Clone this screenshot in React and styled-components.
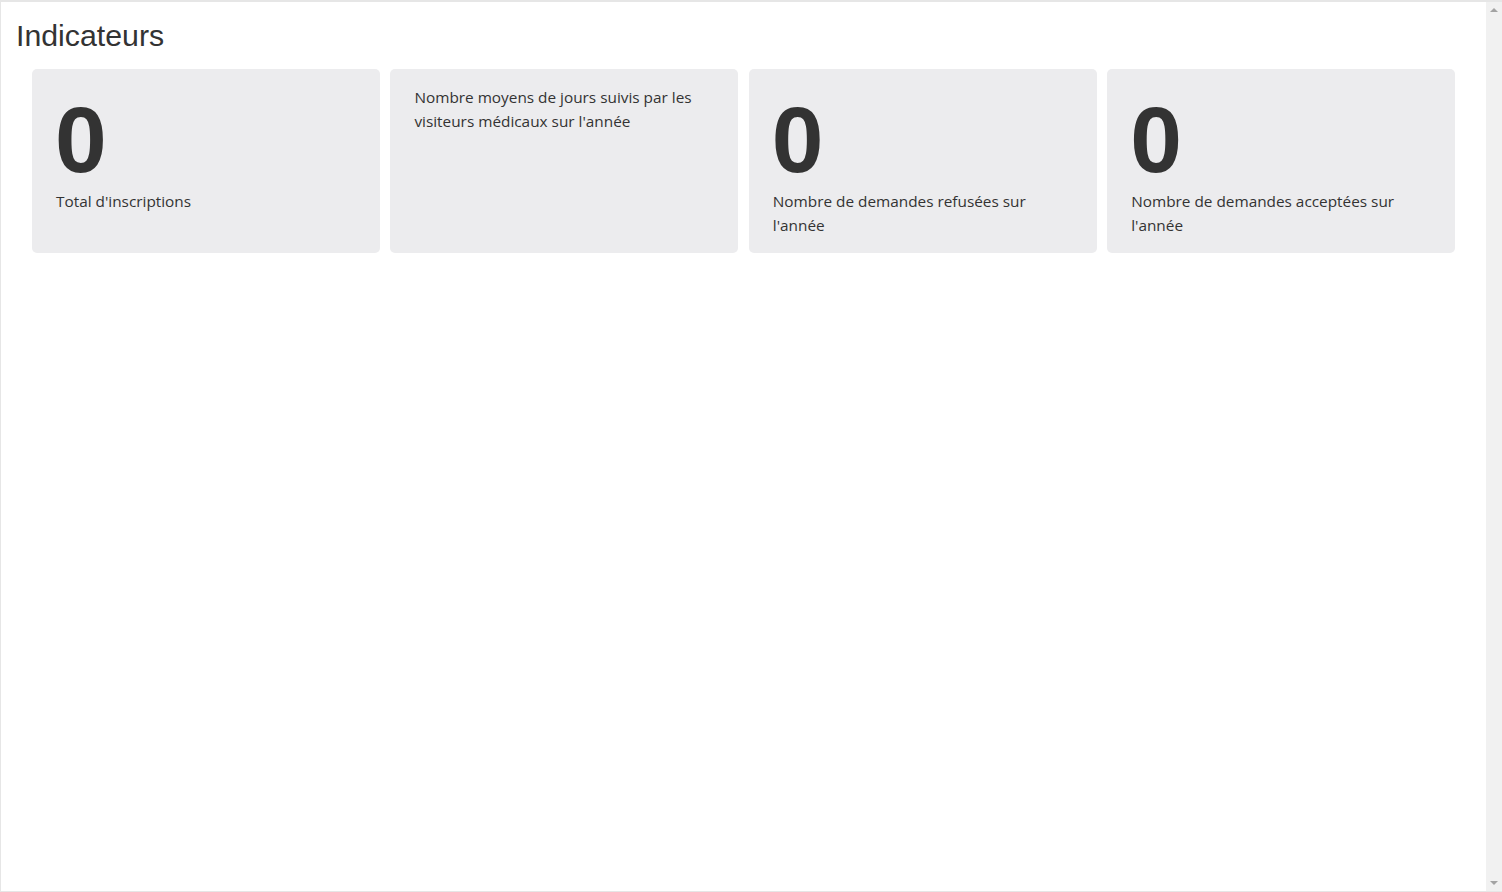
import styled, { createGlobalStyle } from "styled-components";

const GlobalStyle = createGlobalStyle`
  html, body {
    margin: 0;
    padding: 0;
    background: #ffffff;
  }
  body {
    font-family: "Open Sans", "Noto Sans", sans-serif;
    color: #333333;
  }
`;

const Frame = styled.div`
  display: flex;
  width: 1502px;
  height: 892px;
  box-sizing: border-box;
  border-top: 2px solid #e6e6e6;
  border-left: 1px solid #e6e6e6;
  border-bottom: 1px solid #e6e6e6;
  overflow: hidden;
`;

const Content = styled.main`
  flex: 1;
  display: flex;
  flex-direction: column;
`;

const Title = styled.h1`
  margin: 15.5px 0 15.5px 15px;
  font-family: "Liberation Sans", Arial, sans-serif;
  font-size: 30.3px;
  line-height: 36px;
  font-weight: 400;
  color: #333333;
`;

const Grid = styled.div`
  display: grid;
  grid-template-columns: repeat(4, 1fr);
  gap: 10.6px;
  padding: 0 31px 0 31px;
`;

const Card = styled.div`
  background: #ececee;
  border-radius: 5px;
  padding: 16px 24px;
  display: flex;
  flex-direction: column;
`;

const Value = styled.div`
  font-family: "Liberation Sans", Arial, sans-serif;
  font-weight: 700;
  font-size: 93px;
  line-height: 90px;
  margin: 10px 0 3.5px -1px;
  color: #333333;
`;

const Label = styled.div`
  font-size: 15.35px;
  line-height: 24px;
  color: #333333;
`;

const Scrollbar = styled.div`
  width: 16px;
  background: #f1f1f1;
  display: flex;
  flex-direction: column;
  justify-content: space-between;
  align-items: center;
  padding: 6px 0;
`;

const Arrow = styled.span`
  width: 0;
  height: 0;
  border-left: 4px solid transparent;
  border-right: 4px solid transparent;
  ${(p) =>
    p.$up
      ? "border-bottom: 4px solid #a3a3a3;"
      : "border-top: 4px solid #a3a3a3;"}
`;

const indicators = [
  { value: 0, label: "Total d'inscriptions" },
  { label: "Nombre moyens de jours suivis par les visiteurs médicaux sur l'année" },
  { value: 0, label: "Nombre de demandes refusées sur l'année" },
  { value: 0, label: "Nombre de demandes acceptées sur l'année" },
];

export default function App() {
  return (
    <>
      <GlobalStyle />
      <Frame>
        <Content>
          <Title>Indicateurs</Title>
          <Grid>
            {indicators.map((item, i) => (
              <Card key={i}>
                {item.value !== undefined && <Value>{item.value}</Value>}
                <Label>{item.label}</Label>
              </Card>
            ))}
          </Grid>
        </Content>
        <Scrollbar>
          <Arrow $up />
          <Arrow />
        </Scrollbar>
      </Frame>
    </>
  );
}
